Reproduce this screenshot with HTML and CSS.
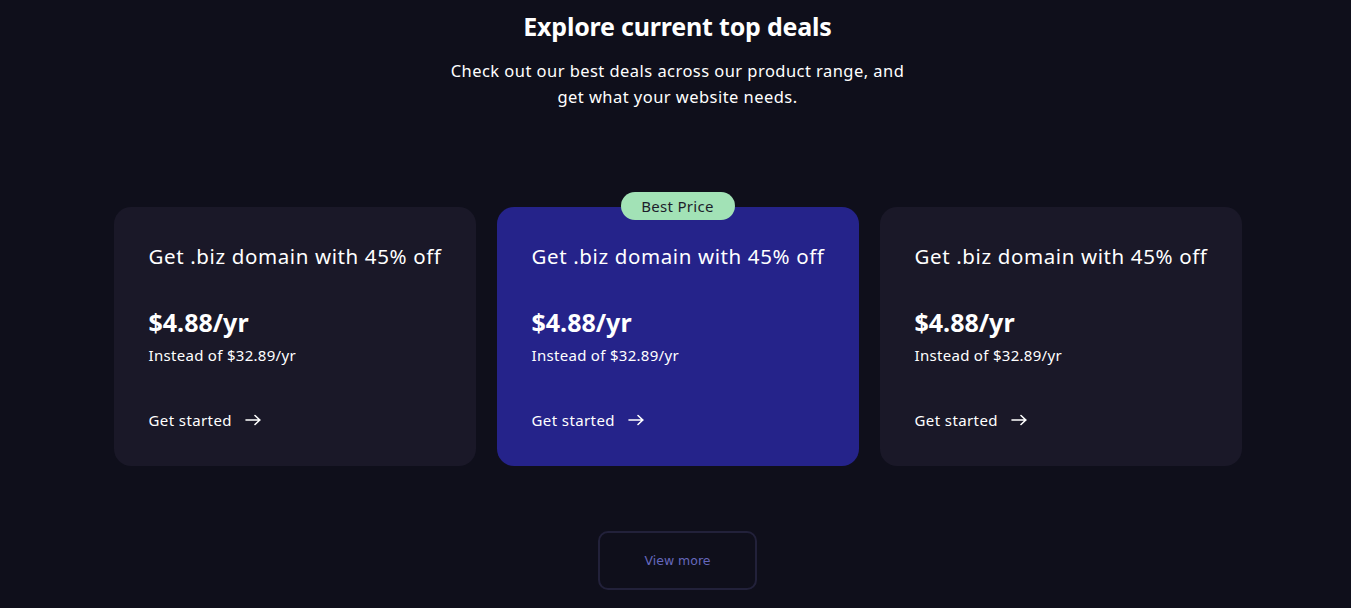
FILE: index.html
```html
<!DOCTYPE html>
<html lang="en">
<head>
<meta charset="utf-8">
<title>Top deals</title>
<link rel="stylesheet" href="styles.css">
</head>
<body>
<section class="deals">
  <h1 class="deals-title">Explore current top deals</h1>
  <p class="deals-sub">Check out our best deals across our product range, and get what your website needs.</p>
  <div class="cards">
    <div class="card">
      <h2 class="card-title">Get .biz domain with 45% off</h2>
      <div class="price">$4.88/yr</div>
      <div class="old">Instead of $32.89/yr</div>
      <a class="cta" href="#">Get started <svg class="arrow" width="17" height="12" viewBox="0 0 17 12"><path d="M1 6h14M10 1.5l4.8 4.5L10 10.5" fill="none" stroke="#fff" stroke-width="1.6" stroke-linecap="round" stroke-linejoin="round"/></svg></a>
    </div>
    <div class="card card-featured">
      <span class="badge">Best Price</span>
      <h2 class="card-title">Get .biz domain with 45% off</h2>
      <div class="price">$4.88/yr</div>
      <div class="old">Instead of $32.89/yr</div>
      <a class="cta" href="#">Get started <svg class="arrow" width="17" height="12" viewBox="0 0 17 12"><path d="M1 6h14M10 1.5l4.8 4.5L10 10.5" fill="none" stroke="#fff" stroke-width="1.6" stroke-linecap="round" stroke-linejoin="round"/></svg></a>
    </div>
    <div class="card">
      <h2 class="card-title">Get .biz domain with 45% off</h2>
      <div class="price">$4.88/yr</div>
      <div class="old">Instead of $32.89/yr</div>
      <a class="cta" href="#">Get started <svg class="arrow" width="17" height="12" viewBox="0 0 17 12"><path d="M1 6h14M10 1.5l4.8 4.5L10 10.5" fill="none" stroke="#fff" stroke-width="1.6" stroke-linecap="round" stroke-linejoin="round"/></svg></a>
    </div>
  </div>
  <div class="more-wrap"><a class="more" href="#">View more</a></div>
</section>
</body>
</html>
```
FILE: styles.css
```css
html, body {
  margin: 0;
  padding: 0;
}
body {
  background: #0f0f1b;
  color: #fff;
  font-family: "Noto Sans", "Open Sans", sans-serif;
  height: 608px;
  overflow: hidden;
}
.deals {
  display: flex;
  flex-direction: column;
  align-items: center;
  padding-left: 4px;
}
.deals-title {
  margin: 10px 0 0;
  font-size: 25px;
  line-height: 32px;
  font-weight: 700;
  letter-spacing: -0.2px;
}
.deals-sub {
  margin: 16px 0 0;
  width: 462px;
  text-align: center;
  font-size: 16.5px;
  line-height: 26px;
  letter-spacing: 0.45px;
}
.cards {
  margin-top: 97px;
  display: flex;
  gap: 21px;
}
.card {
  position: relative;
  width: 362px;
  height: 259px;
  box-sizing: border-box;
  padding: 36px 35px;
  background: #1a1828;
  border-radius: 17px;
  display: flex;
  flex-direction: column;
  align-items: flex-start;
}
.card-featured {
  background: #25238a;
}
.badge {
  position: absolute;
  top: -15px;
  left: 50%;
  transform: translateX(-50%);
  width: 114px;
  height: 28px;
  line-height: 28px;
  text-align: center;
  border-radius: 14px;
  background: #a2e2b6;
  color: #1d1d2b;
  font-size: 15px;
  letter-spacing: 0.3px;
}
.card-title {
  margin: 0;
  font-size: 20.5px;
  line-height: 26px;
  font-weight: 400;
  letter-spacing: 0.62px;
  white-space: nowrap;
}
.price {
  margin-top: 38px;
  font-size: 25px;
  line-height: 30px;
  font-weight: 700;
}
.old {
  margin-top: 8px;
  font-size: 15px;
  line-height: 20px;
  letter-spacing: 0.3px;
}
.cta {
  margin-top: 45px;
  font-size: 15px;
  line-height: 20px;
  letter-spacing: 0.4px;
  color: #fff;
  text-decoration: none;
  display: flex;
  align-items: center;
  gap: 13px;
}
.arrow {
  display: block;
}
.more-wrap {
  margin-top: 65px;
}
.more {
  display: flex;
  align-items: center;
  justify-content: center;
  width: 159px;
  height: 59px;
  box-sizing: border-box;
  border: 2px solid #22213a;
  border-radius: 10px;
  color: #6567bd;
  font-family: "DejaVu Sans", sans-serif;
  font-size: 12.5px;
  text-decoration: none;
}
```
